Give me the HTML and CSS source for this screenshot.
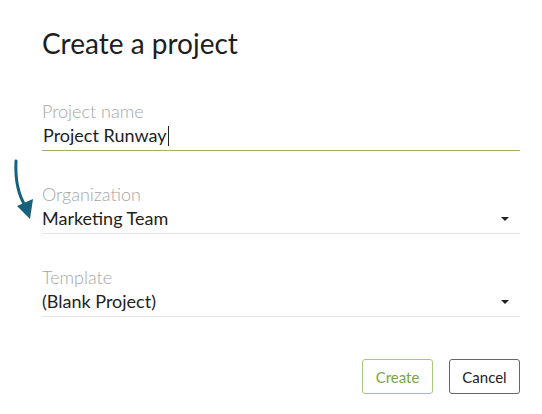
FILE: index.html
```html
<!DOCTYPE html>
<html>
<head>
<meta charset="utf-8">
<link rel="stylesheet" href="styles.css">
</head>
<body>
<div class="dialog">
  <svg class="arrow" width="40" height="70" viewBox="0 0 40 70">
    <path d="M11 10 C 10 30, 13 44, 21 56" fill="none" stroke="#15627a" stroke-width="3" stroke-linecap="round"/>
    <path d="M12 55 L 28 48 L 25 68 Z" fill="#15627a"/>
  </svg>
  <h1 class="title">Create a project</h1>
  <div class="field">
    <div class="label">Project name</div>
    <div class="value">Project Runway<span class="cursor"></span></div>
    <div class="line active"></div>
  </div>
  <div class="field">
    <div class="label">Organization</div>
    <div class="value select"><span>Marketing Team</span><span class="caret"></span></div>
    <div class="line"></div>
  </div>
  <div class="field">
    <div class="label">Template</div>
    <div class="value select"><span>(Blank Project)</span><span class="caret"></span></div>
    <div class="line"></div>
  </div>
  <div class="actions">
    <button class="btn create">Create</button>
    <button class="btn cancel">Cancel</button>
  </div>
</div>
</body>
</html>
```
FILE: styles.css
```css
html, body {
  margin: 0;
  padding: 0;
  background: #fff;
}
body {
  font-family: Lato, "Open Sans", sans-serif;
  color: #222;
}
.dialog {
  position: relative;
  padding: 25px 22px 0 42px;
}
.arrow {
  position: absolute;
  left: 5px;
  top: 151px;
}
.title {
  margin: 0;
  font-size: 28px;
  font-weight: 400;
  line-height: 36px;
  color: #1e1e1e;
}
.field {
  margin-top: 32px;
}
.field:first-of-type {
  margin-top: 39px;
}
.label {
  font-size: 18px;
  font-weight: 300;
  line-height: 22px;
  color: #a6a6a6;
}
.value {
  margin-top: 1px;
  font-size: 18px;
  line-height: 24px;
  color: #1e1e1e;
  padding-left: 1px;
  padding-bottom: 3px;
}
.select {
  display: flex;
  justify-content: space-between;
  align-items: center;
  padding-left: 0;
}
.cursor {
  display: inline-block;
  width: 1px;
  height: 20px;
  background: #222;
  vertical-align: -4px;
  margin-left: 1px;
}
.caret {
  width: 0;
  height: 0;
  border-left: 4px solid transparent;
  border-right: 4px solid transparent;
  border-top: 4px solid #222;
  margin-right: 11px;
  margin-top: 2px;
}
.line {
  height: 1px;
  background: #e3e3e3;
}
.line.active {
  background: #9ab46c;
}
.actions {
  display: flex;
  justify-content: flex-end;
  gap: 16px;
  margin-top: 42px;
}
.btn {
  width: 71px;
  height: 35px;
  border-radius: 3px;
  background: #fff;
  font-family: Lato, "Open Sans", sans-serif;
  font-size: 15px;
  padding: 0;
}
.create {
  border: 1px solid #a8c682;
  color: #77a544;
}
.cancel {
  border: 1px solid #666;
  color: #222;
}
```
